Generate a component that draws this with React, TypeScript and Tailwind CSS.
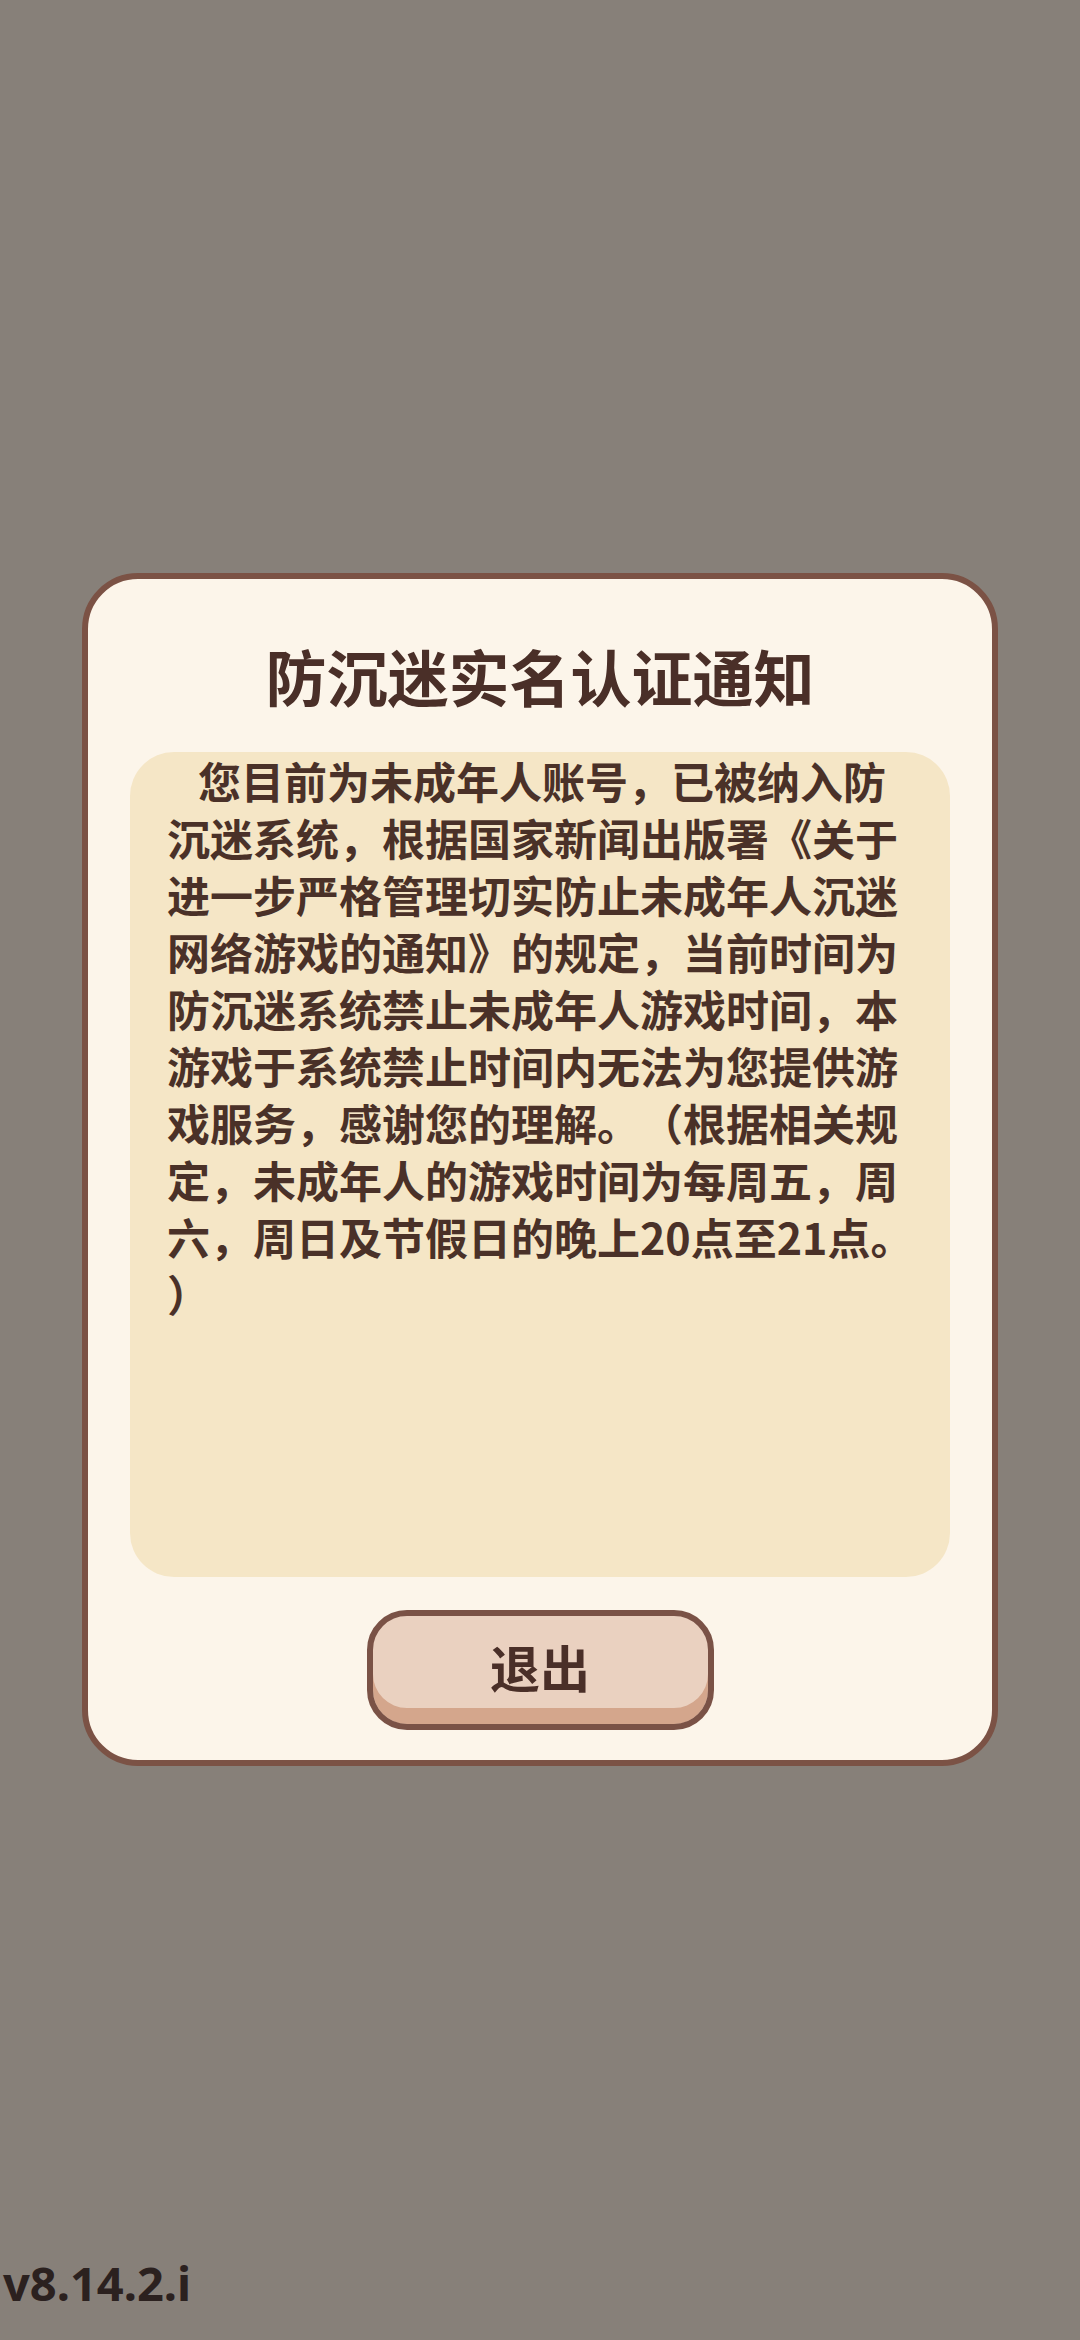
const lines = [
  "您目前为未成年人账号，已被纳入防",
  "沉迷系统，根据国家新闻出版署《关于",
  "进一步严格管理切实防止未成年人沉迷",
  "网络游戏的通知》的规定，当前时间为",
  "防沉迷系统禁止未成年人游戏时间，本",
  "游戏于系统禁止时间内无法为您提供游",
  "戏服务，感谢您的理解。（根据相关规",
  "定，未成年人的游戏时间为每周五，周",
  "六，周日及节假日的晚上20点至21点。",
  "）",
];

const cjk = { fontFamily: '"Noto Sans CJK SC", "Noto Sans", sans-serif' };

export default function App() {
  return (
    <div
      className="flex flex-col h-[2340px] w-[1080px] bg-[#878079] pt-[573px] [text-spacing-trim:space-all]"
      style={cjk}
    >
      {/* notice dialog */}
      <div className="mx-[82px] flex flex-col rounded-[56px] border-[6px] border-[#7b5245] bg-[#fcf5ea] px-[42px] pt-[57px] pb-[30px]">
        <h1 className="text-center text-[61px] leading-[80px] font-bold text-[#4a2f28]">
          防沉迷实名认证通知
        </h1>
        <div className="mt-[36px] h-[825px] rounded-[44px] bg-[#f5e6c6] pl-[37px]">
          {lines.map((line, i) => (
            <div
              key={i}
              className={
                "whitespace-nowrap text-[43px] leading-[57px] font-bold text-[#4a3128]" +
                (i === 0 ? " pl-[31px]" : "")
              }
            >
              {line}
            </div>
          ))}
        </div>
        <div className="mt-[33px] flex justify-center">
          <button className="flex h-[120px] w-[347px] items-center justify-center rounded-[40px] border-[6px] border-[#7a5246] bg-[#ead1c0] pb-[8px] shadow-[inset_0_-16px_0_#d4a68c] text-[50px] font-bold text-[#4a2f28]">
            退出
          </button>
        </div>
      </div>
      <div className="flex-1" />
      <div
        className="pl-[3px] pb-[33px] text-[47px] leading-none font-bold text-[#2b211f]"
        style={{ fontFamily: '"Noto Sans", sans-serif' }}
      >
        v8.14.2.i
      </div>
    </div>
  );
}
